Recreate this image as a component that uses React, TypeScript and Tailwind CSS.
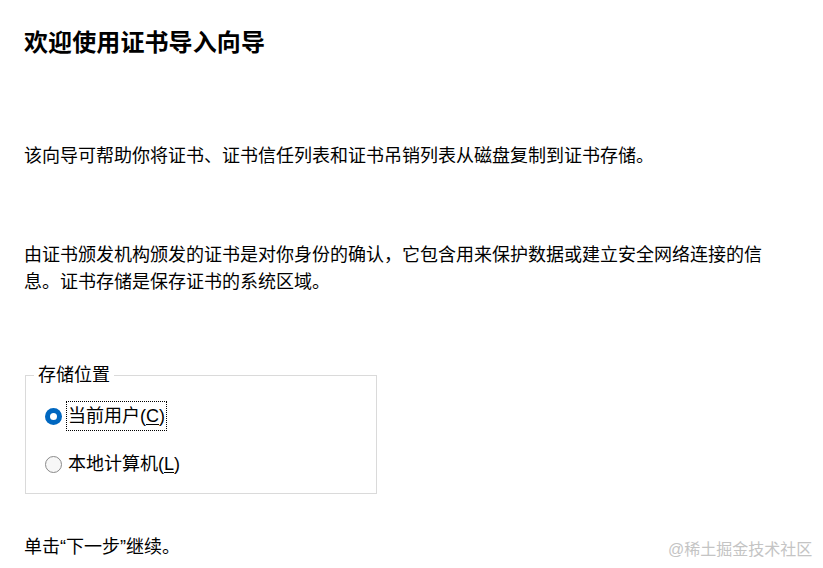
import React from "react";

export default function App() {
  const font = { fontFamily: '"Liberation Sans", "Noto Sans CJK SC", sans-serif' };
  return (
    <div
      className="relative w-[823px] h-[568px] overflow-hidden bg-white text-black pl-[24px]"
      style={font}
    >
      <h1 className="pt-[27px] text-[24px] leading-[32px] font-bold tracking-[0.1px]">
        欢迎使用证书导入向导
      </h1>

      <p className="mt-[84px] text-[18px] leading-[27px]">
        该向导可帮助你将证书、证书信任列表和证书吊销列表从磁盘复制到证书存储。
      </p>

      <p className="mt-[72px] w-[740px] text-[18px] leading-[27px]">
        由证书颁发机构颁发的证书是对你身份的确认，它包含用来保护数据或建立安全网络连接的信息。证书存储是保存证书的系统区域。
      </p>

      <fieldset className="mt-[67px] ml-px w-[352px] border border-[#dadada] pb-[14px]">
        <legend className="ml-[8px] px-[4px] text-[18px] leading-[24px]">存储位置</legend>

        <div className="mt-[14px] ml-[19px] flex h-[30px] items-center">
          <span className="flex h-[17px] w-[17px] items-center justify-center rounded-full bg-[#0067c0]">
            <span className="h-[7px] w-[7px] rounded-full bg-white" />
          </span>
          <span className="ml-[4px] border border-dotted border-black px-[1px] text-[18px] leading-[28px]">
            当前用户(<span className="underline underline-offset-2">C</span>)
          </span>
        </div>

        <div className="mt-[18px] ml-[19px] flex h-[30px] items-center">
          <span className="h-[17px] w-[17px] rounded-full border border-[#8a8a8a] bg-[#f7f7f7]" />
          <span className="ml-[5px] px-[1px] text-[18px] leading-[28px]">
            本地计算机(<span className="underline underline-offset-2">L</span>)
          </span>
        </div>
      </fieldset>

      <p className="mt-[40px] text-[18px] leading-[27px]">单击“下一步”继续。</p>

      <div className="absolute left-[668px] top-[540px] text-[16px] leading-[20px] text-[#c4c4c4]">
        @稀土掘金技术社区
      </div>
    </div>
  );
}
